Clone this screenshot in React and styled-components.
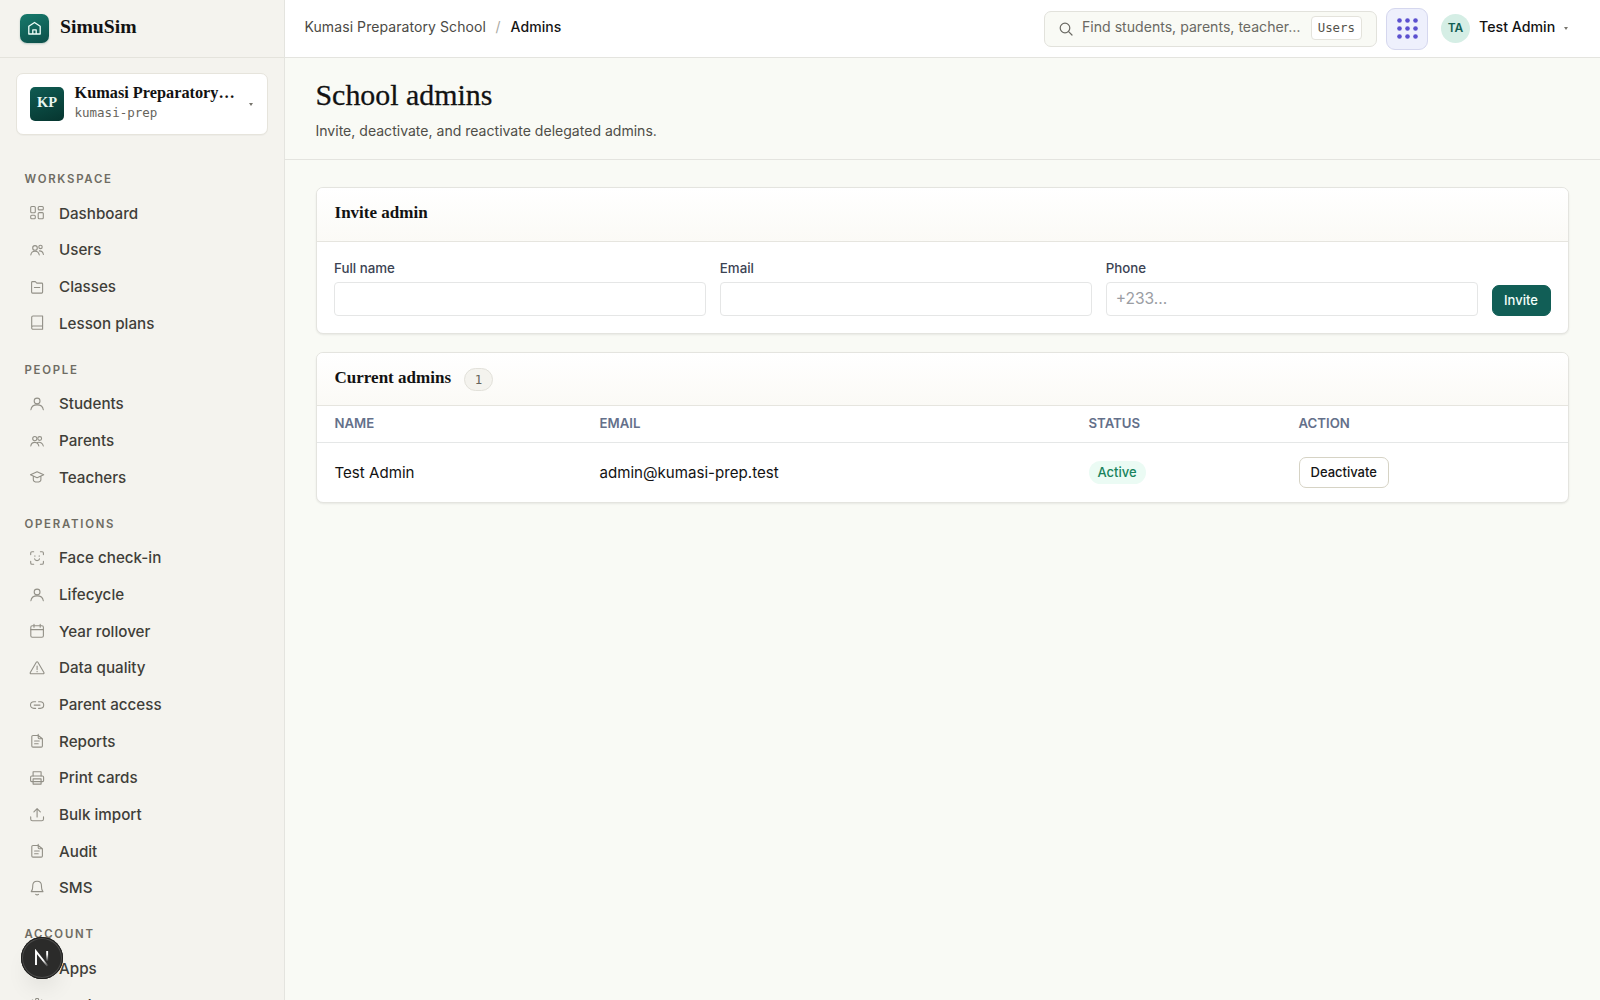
import React from 'react';
import styled, { createGlobalStyle } from 'styled-components';

const GlobalStyle = createGlobalStyle`
  * {
    box-sizing: border-box;
  }

  body {
    margin: 0;
    overflow: hidden;
    background: #f9faf5;
    color: #121212;
    font-family: Inter, 'Liberation Sans', sans-serif;
    font-size: 15px;
  }

  button, input {
    font-family: inherit;
  }
`;

const serif = "'Liberation Serif', serif";
const mono = "'DejaVu Sans Mono', monospace";

const Shell = styled.div`
  display: grid;
  grid-template-columns: 284.5px 1fr;
  height: 100vh;
`;

/* ---------- Sidebar ---------- */

const Sidebar = styled.aside`
  height: 100vh;
  overflow: hidden;
  background: #f4f3ee;
  border-right: 1px solid #e4e4df;
`;

const Brand = styled.div`
  display: flex;
  align-items: flex-start;
  gap: 11px;
  height: 58px;
  padding: 14px 20px 0;
  border-bottom: 1px solid #e4e3dc;
`;

const BrandMark = styled.div`
  display: grid;
  place-items: center;
  width: 29px;
  height: 29px;
  border-radius: 7px;
  background: linear-gradient(160deg, #177a6c, #0c4f49);
  box-shadow: 0 1px 2px rgba(12, 79, 73, 0.25);
`;

const BrandName = styled.span`
  font-family: ${serif};
  font-size: 19.7px;
  font-weight: 700;
  line-height: 24px;
`;

const SchoolCard = styled.div`
  display: flex;
  align-items: center;
  height: 62px;
  margin: 15px 16px 16px;
  padding: 0 13px;
  background: #fff;
  border: 1px solid #e6e4dc;
  border-radius: 7px;
  box-shadow: 0 1px 1px rgba(30, 30, 20, 0.03);
`;

const SchoolBadge = styled.div`
  flex: none;
  width: 34px;
  height: 34px;
  border-radius: 5px;
  background: linear-gradient(160deg, #0f5c53, #06352f);
  color: #e9f7f2;
  font-family: ${serif};
  font-size: 14.5px;
  font-weight: 700;
  line-height: 31px;
  text-align: center;
`;

const SchoolText = styled.div`
  width: 165px;
  margin-left: 10.5px;
`;

const SchoolName = styled.div`
  white-space: nowrap;
  font-family: ${serif};
  font-size: 16.3px;
  font-weight: 700;
  line-height: 20px;
`;

const SchoolSlug = styled.div`
  margin-bottom: 3px;
  color: #66645c;
  font-family: ${mono};
  font-size: 12.5px;
  line-height: 19px;
`;

const Caret = styled.span`
  width: 0;
  height: 0;
  margin-left: ${({ $gap }) => $gap}px;
  border-left: 2px solid transparent;
  border-right: 2px solid transparent;
  border-top: 3px solid #77756d;
`;

const SectionLabel = styled.h2`
  height: 44px;
  margin: 0;
  padding: 21px 24px 0 24.5px;
  color: #6e6c63;
  font-size: 11.4px;
  font-weight: 600;
  letter-spacing: 1.75px;
  line-height: 15px;
`;

const NavItem = styled.a`
  display: flex;
  align-items: center;
  gap: 14px;
  height: 36.67px;
  padding-left: 29px;
  color: #3f3e39;
  font-size: 15.2px;
  font-weight: 450;

  svg {
    flex: none;
    color: #929087;
  }
`;

const DevBadge = styled.div`
  position: fixed;
  left: 21px;
  bottom: 21px;
  display: grid;
  place-items: center;
  width: 42px;
  height: 42px;
  border-radius: 50%;
  background: #2b2b2a;
  box-shadow: inset 0 0 0 1px #1d1d1c, inset 0 0 0 2px #4a4a49,
    0 14px 24px -8px rgba(0, 0, 0, 0.12);
`;

/* ---------- Top bar ---------- */

const Main = styled.main`
  min-width: 0;
`;

const TopBar = styled.header`
  display: flex;
  align-items: center;
  height: 58px;
  padding: 0 32px 0 20px;
  background: #fff;
  border-bottom: 1px solid #e4e4df;
`;

const Breadcrumb = styled.nav`
  display: flex;
  flex: 1;
  padding-bottom: 4px;
  color: #4b4a45;
  font-size: 14px;
  letter-spacing: 0.08px;

  i {
    margin: 0 10px 0 9.5px;
    color: #aaa9a2;
    font-style: normal;
  }

  b {
    color: #151515;
    font-weight: 500;
  }
`;

const Search = styled.div`
  display: flex;
  align-items: center;
  width: 333px;
  height: 36px;
  padding: 0 14px 0 14px;
  background: #f9faf5;
  border: 1px solid #e2e2dc;
  border-radius: 7px;
  color: #6a6963;
`;

const SearchText = styled.span`
  flex: 1;
  margin-left: 9px;
  padding-bottom: 4px;
  font-size: 14.1px;
  white-space: nowrap;
`;

const Kbd = styled.kbd`
  height: 24px;
  margin-bottom: 1px;
  padding: 0 6px;
  background: #fff;
  border: 1px solid #e4e3dc;
  border-radius: 4px;
  color: #55534c;
  font-family: ${mono};
  font-size: 12.4px;
  line-height: 22px;
`;

const AppsButton = styled.button`
  display: grid;
  place-items: center;
  width: 42px;
  height: 42px;
  margin: 0 13px 0 9px;
  padding: 0;
  background: #eef0fc;
  border: 1px solid #d5d7ee;
  border-radius: 9px;
`;

const Avatar = styled.span`
  width: 29px;
  height: 29px;
  border-radius: 50%;
  background: #d5eee5;
  color: #135e53;
  font-size: 12px;
  font-weight: 600;
  line-height: 28px;
  text-align: center;
`;

const UserName = styled.span`
  width: 76px;
  margin-left: 9px;
  padding-bottom: 4px;
  font-size: 14.2px;
  font-weight: 450;
  white-space: nowrap;
`;

/* ---------- Page ---------- */

const PageHeader = styled.div`
  height: 102px;
  padding: 20px 31px 0;
  border-bottom: 1px solid #e4e4df;
`;

const PageTitle = styled.h1`
  margin: 0;
  font-family: ${serif};
  font-size: 29.9px;
  font-weight: 400;
  line-height: 34px;
  -webkit-text-stroke: 0.3px #121212;
`;

const PageText = styled.p`
  margin: 8px 0 0;
  color: #4f4e48;
  font-size: 14.05px;
  line-height: 21px;
`;

const Content = styled.div`
  display: flex;
  flex-direction: column;
  gap: 18px;
  padding: 27px 31px 0 31px;
`;

const Card = styled.section`
  overflow: hidden;
  background: #fff;
  border: 1px solid #e4e4df;
  border-radius: 7px;
  box-shadow: 0 1px 2px rgba(30, 30, 20, 0.08);
`;

const CardHeader = styled.div`
  display: flex;
  align-items: center;
  gap: 13px;
  height: ${({ $height }) => $height || 54}px;
  padding: 0 18px;
  background: linear-gradient(#fff, #fbfaf6);
  border-bottom: 1px solid #e6e5df;
`;

const CardTitle = styled.h3`
  margin: 0;
  padding-bottom: 3px;
  font-family: ${serif};
  font-size: 17.05px;
  font-weight: 700;
  line-height: 20px;
`;

const Count = styled.span`
  width: 29px;
  height: 23px;
  background: #f4f3ee;
  border: 1px solid #e2e1da;
  border-radius: 12px;
  color: #66645c;
  font-family: ${mono};
  font-size: 12.4px;
  line-height: 21px;
  text-align: center;
`;

const InviteForm = styled.form`
  display: grid;
  grid-template-columns: 1fr 1fr 1fr 59px;
  gap: 13.5px;
  align-items: end;
  height: 91px;
  padding: 0 17.5px 17px;
`;

const Field = styled.label`
  display: block;
  color: #3b4353;
  font-size: 13.3px;
  font-weight: 500;
  line-height: 18px;
`;

const Input = styled.input`
  display: block;
  width: 100%;
  height: 34px;
  margin-top: 5px;
  padding: 0 9px 1px;
  background: #fff;
  border: 1px solid #e5e6e6;
  border-radius: 4px;
  font-size: 15.6px;

  &::placeholder {
    color: #9b9da3;
  }
`;

const Button = styled.button`
  height: 31px;
  padding: 0 11px 1px;
  background: ${({ $primary }) => ($primary ? '#115e56' : '#fff')};
  border: 1px solid ${({ $primary }) => ($primary ? '#115e56' : '#d6d3c5')};
  border-radius: 7px;
  color: ${({ $primary }) => ($primary ? '#f4fffb' : '#151515')};
  font-size: 13px;
  font-weight: 500;
  white-space: nowrap;
`;

const Table = styled.table`
  width: 100%;
  border-collapse: collapse;
  table-layout: fixed;

  th, td {
    padding: 0 18px;
    text-align: left;
  }

  th {
    height: 36px;
    padding-bottom: 1px;
    border-bottom: 1px solid #e5e7e7;
    color: #64708a;
    font-size: 13.2px;
    font-weight: 600;
  }

  td {
    height: 60px;
    font-size: 15.1px;
  }
`;

const Status = styled.span`
  display: inline-block;
  height: 23px;
  padding: 0 9px;
  border-radius: 12px;
  background: #ebfbf4;
  color: #17835c;
  font-size: 13px;
  font-weight: 450;
  line-height: 23px;
`;

/* Icon artwork on a 16px grid, keyed by name */
const ICONS = {
  dashboard: (
    <>
      <rect x="1.7" y="1.5" width="4.6" height="6.2" rx="1" />
      <rect x="9.2" y="1.5" width="5.1" height="3.4" rx="1" />
      <rect x="1.7" y="10.3" width="4.6" height="3.4" rx="1" />
      <rect x="9.2" y="7.6" width="5.1" height="6.1" rx="1" />
    </>
  ),
  users: (
    <>
      <circle cx="6" cy="5.9" r="2.3" />
      <circle cx="11.5" cy="4.9" r="1.7" />
      <path d="M1.8 13c.3-2.400 2-3.800 4.200-3.800s3.900 1.400 4.300 3.800M10.400 8.900c2.200 0 3.600 1.300 4 3.600" />
    </>
  ),
  folder: <path d="M2.600 13.100V3.500c0-.6.4-.9.900-.9h2.800l1.500 1.500h4.900c.6 0 .9.400.9.900v8.100c0 .6-.4 1-.9 1H3.500c-.6 0-.9-.4-.9-1zM5.400 8.500h5.400" />,
  book: <path d="M2.700 12.900V2.300c0-.8.600-1.300 1.300-1.300h9.600v13.200H4c-.7 0-1.300-.6-1.300-1.300zM2.700 12.200c0-.8.600-1.200 1.300-1.200h9.600" />,
  user: (
    <>
      <circle cx="8.100" cy="5" r="2.900" />
      <path d="M1.900 13.700c.4-3 2.900-4.800 6.200-4.800s5.800 1.800 6.200 4.800" />
    </>
  ),
  parents: (
    <>
      <circle cx="5.800" cy="5.600" r="2.100" />
      <circle cx="10.700" cy="5.500" r="1.900" />
      <path d="M1.800 13c.3-2.200 1.900-3.600 4-3.600 1.300 0 2.400.5 3.100 1.400M8.300 9.500c3.300-.7 5.500.7 6 3.500M8.900 10.800c.5.600.8 1.400.9 2.200" />
    </>
  ),
  cap: <path d="M8.100 2.700l6.600 3-6.600 3-6.600-3zM4.300 7.100v3.300c0 1.500 1.500 2.600 3.800 2.600s3.800-1.100 3.800-2.600V7.100" />,
  face: (
    <>
      <path d="M1.700 4.600V3c0-.8.500-1.300 1.300-1.300h1.700M11.400 1.700h1.700c.8 0 1.300.5 1.300 1.300v1.600M14.400 11.400V13c0 .8-.5 1.300-1.300 1.300h-1.700M4.700 14.300H3c-.8 0-1.300-.5-1.300-1.300v-1.600" />
      <path d="M5.600 8.900c.5 2.300 4.400 2.300 4.900 0M5.900 5.800v.4M10.200 5.800v.4" />
    </>
  ),
  calendar: (
    <>
      <rect x="1.800" y="2.700" width="12.600" height="11.600" rx="1.500" />
      <path d="M1.800 6.600h12.600M5 1.200v3M11.200 1.200v3" />
    </>
  ),
  warning: <path d="M7.300 2.200L1.300 12.500c-.4.700 0 1.300.8 1.300h12c.8 0 1.200-.6.800-1.300L8.900 2.200c-.4-.6-1.200-.6-1.600 0zM8.100 6v3.500M8.100 11.300v.4" />,
  link: <path d="M6.600 11.400H4.900c-2 0-3.400-1.400-3.400-3.300s1.400-3.300 3.400-3.300h1.700M9.600 4.800h1.700c2 0 3.400 1.400 3.400 3.300s-1.400 3.300-3.400 3.300H9.600M5.200 8.100h5.800" />,
  report: <path d="M9.200 2.500H4c-.7 0-1.200.5-1.200 1.200v9.200c0 .7.500 1.200 1.200 1.200h8.200c.7 0 1.200-.5 1.200-1.200V5.800zM9.200 1.300v3.300c0 .7.300 1.100 1 1.100h3.200M5.600 8h4.600M5.600 10.700h3.600" />,
  printer: (
    <>
      <path d="M4.100 6V1.700h8V6" />
      <path d="M4.100 11.600H2.600c-.6 0-1-.4-1-1V7.200c0-.8.500-1.200 1.200-1.200h10.600c.7 0 1.200.4 1.200 1.200v3.400c0 .6-.4 1-1 1h-1.500" />
      <rect x="4.100" y="8.900" width="8" height="5.200" />
      <path d="M4.100 11.600h8" />
    </>
  ),
  upload: <path d="M8.100 10V1.800M4.900 4.900l3.200-3.200 3.200 3.200M1.700 9.900V12c0 1.100.7 1.800 1.800 1.800h9.200c1.100 0 1.800-.7 1.800-1.800V9.900" />,
  bell: <path d="M2.200 11.600c1.200-1.100 1.500-2.200 1.500-4.500v-1.200c0-2.700 1.700-4.700 4.400-4.700s4.400 2 4.400 4.700v1.200c0 2.300.3 3.400 1.500 4.500zM6.700 14.300c.8.700 2 .7 2.800 0" />,
  gear: (
    <>
      <circle cx="8.100" cy="8" r="2.200" />
      <path d="M6.900 1.500h2.400l.4 1.800 1.500.7 1.600-.9 1.500 1.800-1 1.500.4 1.600 1.400 1-.8 2-1.800.1-1.100 1.200.1 1.700H4.700l.1-1.700-1.100-1.200-1.800-.1-.8-2 1.400-1 .4-1.600-1-1.500 1.500-1.800 1.600.9 1.500-.7z" />
    </>
  ),
};

const Icon = ({ name }) => (
  <svg width="16" height="16" viewBox="0 0 16 16" fill="none" stroke="currentColor" strokeWidth="1.1" strokeLinecap="round" strokeLinejoin="round">
    {ICONS[name]}
  </svg>
);

const SECTIONS = [
  {
    label: 'WORKSPACE',
    items: [
      ['dashboard', 'Dashboard'],
      ['users', 'Users'],
      ['folder', 'Classes'],
      ['book', 'Lesson plans'],
    ],
  },
  {
    label: 'PEOPLE',
    items: [
      ['user', 'Students'],
      ['parents', 'Parents'],
      ['cap', 'Teachers'],
    ],
  },
  {
    label: 'OPERATIONS',
    items: [
      ['face', 'Face check-in'],
      ['user', 'Lifecycle'],
      ['calendar', 'Year rollover'],
      ['warning', 'Data quality'],
      ['link', 'Parent access'],
      ['report', 'Reports'],
      ['printer', 'Print cards'],
      ['upload', 'Bulk import'],
      ['report', 'Audit'],
      ['bell', 'SMS'],
    ],
  },
  {
    label: 'ACCOUNT',
    items: [
      ['dashboard', 'Apps'],
      ['gear', 'Settings'],
    ],
  },
];

const DOTS = [2.5, 10.5, 18.5];

const App = () => (
  <>
    <GlobalStyle />
    <Shell>
      <Sidebar>
        <Brand>
          <BrandMark>
            <svg width="15" height="15" viewBox="0 0 15 15" fill="none" stroke="#effffa" strokeWidth="1.3" strokeLinejoin="round">
              <path d="M1.800 13V5.300L7.500 1.500l5.700 3.800V13zM5.800 13V8.800h3.400V13" />
            </svg>
          </BrandMark>
          <BrandName>SimuSim</BrandName>
        </Brand>
        <SchoolCard>
          <SchoolBadge>KP</SchoolBadge>
          <SchoolText>
            <SchoolName>Kumasi Preparatory…</SchoolName>
            <SchoolSlug>kumasi-prep</SchoolSlug>
          </SchoolText>
          <Caret $gap={9} />
        </SchoolCard>
        {SECTIONS.map(({ label, items }) => (
          <div key={label}>
            <SectionLabel>{label}</SectionLabel>
            {items.map(([icon, text]) => (
              <NavItem key={text}>
                <Icon name={icon} />
                {text}
              </NavItem>
            ))}
          </div>
        ))}
      </Sidebar>

      <Main>
        <TopBar>
          <Breadcrumb>
            Kumasi Preparatory School<i>/</i><b>Admins</b>
          </Breadcrumb>
          <Search>
            <svg width="14" height="14" viewBox="0 0 14 14" fill="none" stroke="currentColor" strokeWidth="1.2" strokeLinecap="round">
              <circle cx="6" cy="6" r="4.800" />
              <path d="M9.600 9.600l3.400 3.400" />
            </svg>
            <SearchText>Find students, parents, teacher…</SearchText>
            <Kbd>Users</Kbd>
          </Search>
          <AppsButton aria-label="Apps">
            <svg width="21" height="21" viewBox="0 0 21 21" fill="#5b50cf">
              {DOTS.map((y) => DOTS.map((x) => <circle key={`${x}-${y}`} cx={x} cy={y} r="2.300" />))}
            </svg>
          </AppsButton>
          <Avatar>TA</Avatar>
          <UserName>Test Admin</UserName>
          <Caret $gap={9} />
        </TopBar>

        <PageHeader>
          <PageTitle>School admins</PageTitle>
          <PageText>Invite, deactivate, and reactivate delegated admins.</PageText>
        </PageHeader>

        <Content>
          <Card>
            <CardHeader>
              <CardTitle>Invite admin</CardTitle>
            </CardHeader>
            <InviteForm>
              <Field>
                Full name
                <Input />
              </Field>
              <Field>
                Email
                <Input />
              </Field>
              <Field>
                Phone
                <Input placeholder="+233..." />
              </Field>
              <Button type="button" $primary>Invite</Button>
            </InviteForm>
          </Card>

          <Card>
            <CardHeader $height={53}>
              <CardTitle>Current admins</CardTitle>
              <Count>1</Count>
            </CardHeader>
            <Table>
              <colgroup>
                <col width="265" />
                <col width="489" />
                <col width="210" />
                <col />
              </colgroup>
              <thead>
                <tr>
                  <th>NAME</th>
                  <th>EMAIL</th>
                  <th>STATUS</th>
                  <th>ACTION</th>
                </tr>
              </thead>
              <tbody>
                <tr>
                  <td>Test Admin</td>
                  <td>admin@kumasi-prep.test</td>
                  <td><Status>Active</Status></td>
                  <td><Button type="button">Deactivate</Button></td>
                </tr>
              </tbody>
            </Table>
          </Card>
        </Content>
      </Main>
    </Shell>

    <DevBadge>
      <svg width="18" height="18" viewBox="0 0 18 18" fill="none" strokeWidth="1.900">
        <defs>
          <linearGradient id="stem" x1="0" y1="0" x2="0" y2="1">
            <stop offset="0.3" stopColor="#fff" />
            <stop offset="1" stopColor="#fff" stopOpacity="0" />
          </linearGradient>
          <linearGradient id="slash" x1="0" y1="0" x2="1" y2="1">
            <stop offset="0.6" stopColor="#fff" />
            <stop offset="1" stopColor="#fff" stopOpacity="0.1" />
          </linearGradient>
        </defs>
        <path d="M3 16V2.400L14.600 17" stroke="url(#slash)" />
        <rect x="13.200" y="2" width="1.900" height="10.500" fill="url(#stem)" />
      </svg>
    </DevBadge>
  </>
);

export default App;
